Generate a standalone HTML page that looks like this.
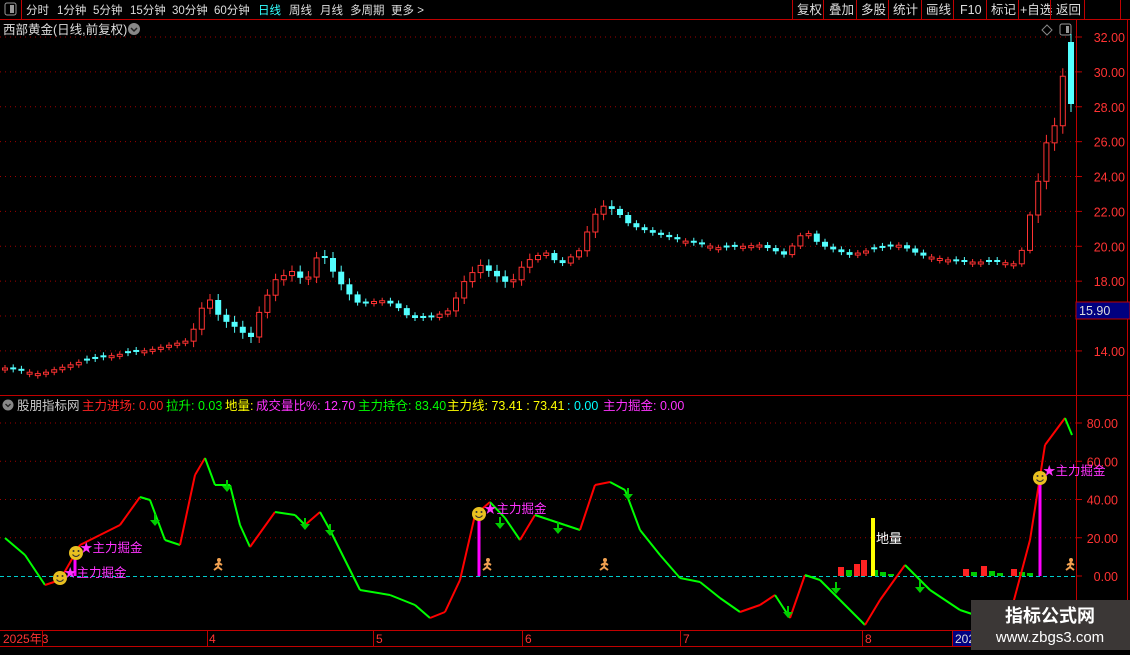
<!DOCTYPE html><html><head><meta charset="utf-8"><style>
body{margin:0;background:#000;width:1130px;height:650px;overflow:hidden;font-family:"Liberation Sans","Noto Sans CJK SC",sans-serif}
svg text{font-family:"Liberation Sans","Noto Sans CJK SC",sans-serif}
</style></head><body>
<svg id="s" width="1130" height="650" xmlns="http://www.w3.org/2000/svg">
<rect width="1130" height="650" fill="#000"/>
<line x1="0" y1="19.5" x2="1130" y2="19.5" stroke="#c00000"/>
<line x1="21.5" y1="0" x2="21.5" y2="19" stroke="#c00000"/>
<rect x="5" y="3" width="11" height="12" rx="2" fill="none" stroke="#999"/><rect x="10" y="5" width="4" height="8" fill="#999"/>
<g font-size="11.5" fill="#ddd">
<text x="26" y="14">分时</text><text x="57" y="14">1分钟</text><text x="93" y="14">5分钟</text><text x="130" y="14">15分钟</text><text x="172" y="14">30分钟</text><text x="214" y="14">60分钟</text>
<text x="258" y="14" fill="#3ff">日线</text><text x="289" y="14">周线</text><text x="320" y="14">月线</text><text x="350" y="14">多周期</text><text x="391" y="14">更多 &gt;</text>
</g>
<g font-size="12.5" fill="#ddd">
<text x="797" y="14">复权</text><text x="829" y="14">叠加</text><text x="861" y="14">多股</text><text x="893" y="14">统计</text><text x="926" y="14">画线</text><text x="960" y="14">F10</text><text x="991" y="14">标记</text><text x="1020" y="14">+自选</text><text x="1056" y="14">返回</text>
</g>
<g stroke="#c00000"><line x1="792.5" y1="0" x2="792.5" y2="19"/><line x1="823.5" y1="0" x2="823.5" y2="19"/><line x1="856.5" y1="0" x2="856.5" y2="19"/><line x1="888.5" y1="0" x2="888.5" y2="19"/><line x1="921.5" y1="0" x2="921.5" y2="19"/><line x1="953.5" y1="0" x2="953.5" y2="19"/><line x1="986.5" y1="0" x2="986.5" y2="19"/><line x1="1018.5" y1="0" x2="1018.5" y2="19"/><line x1="1050.5" y1="0" x2="1050.5" y2="19"/><line x1="1084.5" y1="0" x2="1084.5" y2="19"/><line x1="1120.5" y1="0" x2="1120.5" y2="19"/></g>
<text x="3" y="34" font-size="12.5" fill="#ddd">西部黄金(日线,前复权)</text>
<circle cx="134" cy="29" r="6" fill="#888"/><path d="M131 28l3 3 3-3" stroke="#222" stroke-width="1.5" fill="none"/>
<path d="M1047 25l5 5-5 5-5-5z" fill="none" stroke="#888"/>
<rect x="1060" y="24" width="11" height="11" rx="2" fill="none" stroke="#999"/><rect x="1066" y="26" width="3" height="7" fill="#999"/>
<line x1="1076.5" y1="20" x2="1076.5" y2="650" stroke="#c00000"/>
<line x1="0" y1="395.5" x2="1130" y2="395.5" stroke="#c00000"/>
<line x1="0" y1="630.5" x2="1076" y2="630.5" stroke="#c00000"/>
<line x1="0" y1="646.5" x2="1076" y2="646.5" stroke="#c00000"/>
<line x1="1127.5" y1="20" x2="1127.5" y2="650" stroke="#c00000"/>
<g id="grid"></g><g id="cand"></g><g id="low"></g>
<rect x="1076" y="302" width="54" height="17" fill="#000080" stroke="#c00000"/>
<text x="1079" y="315" font-size="12.5" fill="#ddd">15.90</text>
<circle cx="8" cy="405" r="5.5" fill="#888"/><path d="M5.5 404l2.5 2.5 2.5-2.5" stroke="#222" stroke-width="1.3" fill="none"/>
<g font-size="12.5"><text x="17" y="410" fill="#ccc">股朋指标网</text>
<text x="82" y="410" fill="#f22">主力进场: 0.00</text><text x="166" y="410" fill="#0f0">拉升: 0.03</text><text x="225" y="410" fill="#ff0">地量:</text><text x="256" y="410" fill="#f3f">成交量比%: 12.70</text><text x="358" y="410" fill="#0f0">主力持仓: 83.40</text><text x="447" y="410" fill="#ff0">主力线: 73.41 : 73.41</text><text x="567" y="410" fill="#0ff">: 0.00</text><text x="603" y="410" fill="#f3f">主力掘金: 0.00</text></g>
<g font-size="12" fill="#f33"><text x="3" y="643">2025年3</text><text x="209" y="643">4</text><text x="376" y="643">5</text><text x="525" y="643">6</text><text x="683" y="643">7</text><text x="865" y="643">8</text></g>
<g stroke="#c00000"><line x1="42.5" y1="631" x2="42.5" y2="646"/><line x1="207.5" y1="631" x2="207.5" y2="646"/><line x1="373.5" y1="631" x2="373.5" y2="646"/><line x1="522.5" y1="631" x2="522.5" y2="646"/><line x1="680.5" y1="631" x2="680.5" y2="646"/><line x1="862.5" y1="631" x2="862.5" y2="646"/><line x1="952.5" y1="631" x2="952.5" y2="646"/></g>
<rect x="953" y="631" width="24" height="15" fill="#000080"/><text x="955" y="643" font-size="12" fill="#ddd">202</text>
<rect x="971" y="600" width="159" height="50" fill="#3b3736"/>
<text x="1050" y="622" font-size="18" font-weight="bold" fill="#fff" text-anchor="middle">指标公式网</text>
<text x="1050" y="642" font-size="15" fill="#fff" text-anchor="middle">www.zbgs3.com</text>
</svg>
<script>
(function(){
var NS="http://www.w3.org/2000/svg";
function el(p,t,a){var e=document.createElementNS(NS,t);for(var k in a)e.setAttribute(k,a[k]);p.appendChild(e);return e;}
var g=document.getElementById('grid');
for(var p=14;p<=32;p+=2){var y=37+(32-p)*17.44;
 el(g,'line',{x1:0,y1:y,x2:1076,y2:y,stroke:'#a00000','stroke-dasharray':'1 4'});
 el(g,'line',{x1:1076,y1:y,x2:1082,y2:y,stroke:'#c00000'});
 if(p!=16){var t=el(g,'text',{x:1125,y:y+5,'font-size':12.5,fill:'#f33','text-anchor':'end'});t.textContent=p.toFixed(2);}
}
for(var v=0;v<=80;v+=20){var y=576-v*1.9125;
 if(v>0)el(g,'line',{x1:0,y1:y,x2:1076,y2:y,stroke:'#a00000','stroke-dasharray':'1 4'});
 el(g,'line',{x1:1076,y1:y,x2:1082,y2:y,stroke:'#c00000'});
 var t=el(g,'text',{x:1118,y:y+5,'font-size':12.5,fill:'#f33','text-anchor':'end'});t.textContent=v.toFixed(2);}
el(g,'line',{x1:0,y1:576.5,x2:1076,y2:576.5,stroke:'#0cc','stroke-dasharray':'4 3'});
var K=[[5,368],[40,374],[80,362],[115,355],[150,350],[190,340],[200,310],[210,300],[220,318],[240,330],[250,340],[260,310],[275,280],[295,270],[305,285],[320,250],[335,275],[345,290],[360,305],[380,300],[395,305],[410,318],[430,318],[450,310],[465,280],[480,265],[495,275],[510,285],[525,262],[545,252],[560,265],[580,250],[590,225],[600,205],[615,210],[630,225],[650,232],[680,240],[720,248],[760,245],[785,255],[805,230],[820,245],[850,255],[870,250],[900,245],[920,255],[960,262],[1000,262],[1015,264],[1022,250],[1030,215],[1039,178],[1047,140],[1055,125],[1063,75],[1071,100]];
function interp(x){for(var i=0;i<K.length-1;i++){if(x<=K[i+1][0]){var a=K[i],b=K[i+1];return a[1]+(b[1]-a[1])*(x-a[0])/(b[0]-a[0]);}}return K[K.length-1][1];}
var c=document.getElementById('cand'),prev=interp(0);
for(var i=0;i<=130;i++){var x=5+i*8.2;var cy=interp(x),o=prev,cl=cy;var r=Math.sin(x*1.7);
 if(Math.abs(o-cl)<2){o=cl+2*(r>=0?1:-1);}
 var up=cl<o,tp=Math.min(o,cl),h=Math.max(Math.abs(o-cl),2),col=up?'#ff3232':'#54ffff';
 if(i==130){up=false;col='#54ffff';tp=42;h=62;}
 var big=(x>1030)?8:(x>580&&x<620||x>190&&x<350||x>455&&x<530)?6:3;
 el(c,'line',{x1:x,y1:tp-big,x2:x,y2:tp+h+big,stroke:col});
 if(up)el(c,'rect',{x:x-2.5,y:tp,width:5,height:h,fill:'#000',stroke:col});
 else el(c,'rect',{x:x-3,y:tp,width:6,height:h,fill:col});
 prev=cy;}
var L=[[5,538],[25,555],[45,585],[60,580],[80,545],[100,535],[120,525],[140,497],[150,500],[165,540],[180,545],[195,475],[205,458],[215,485],[230,485],[240,525],[250,547],[275,512],[295,515],[305,525],[320,512],[330,530],[360,590],[390,595],[415,605],[430,618],[445,612],[460,580],[475,515],[490,502],[505,518],[520,540],[535,515],[550,520],[565,525],[580,530],[595,485],[610,482],[625,490],[640,530],[660,555],[680,578],[700,582],[720,598],[740,612],[760,605],[775,595],[790,618],[805,575],[820,580],[840,600],[865,625],[880,600],[905,565],[930,590],[960,610],[990,620],[1010,615],[1030,540],[1045,445],[1065,418],[1072,435]];
var lw=document.getElementById('low');
var vb=[[841,'#f22',567],[849,'#0c0',570],[857,'#f22',564],[864,'#f22',560],[875,'#0c0',570],[883,'#0c0',572],[891,'#0c0',574],[966,'#f22',569],[974,'#0c0',572],[984,'#f22',566],[992,'#0c0',571],[1000,'#0c0',573],[1014,'#f22',569],[1022,'#0c0',572],[1030,'#0c0',573]];
vb.forEach(function(b){el(lw,'rect',{x:b[0]-3,y:b[2],width:6,height:576-b[2],fill:b[1]});});
el(lw,'rect',{x:871,y:518,width:4,height:58,fill:'#ff0'});
var t=el(lw,'text',{x:876,y:543,'font-size':13,fill:'#fff'});t.textContent='地量';
for(var i=0;i<L.length-1;i++){var a=L[i],b=L[i+1];var col=b[1]<a[1]?'#f00':'#0f0';
 el(lw,'line',{x1:a[0],y1:a[1],x2:b[0],y2:b[1],stroke:col,'stroke-width':2});}
[[75,553],[479,514],[1040,478]].forEach(function(s){el(lw,'rect',{x:s[0]-1.5,y:s[1],width:3,height:576-s[1],fill:'#f0f'});});
[[60,578],[76,553],[479,514],[1040,478]].forEach(function(s){el(lw,'circle',{cx:s[0],cy:s[1],r:7,fill:'#e8c020'});
 el(lw,'circle',{cx:s[0]-2.5,cy:s[1]-2,r:1,fill:'#333'});el(lw,'circle',{cx:s[0]+2.5,cy:s[1]-2,r:1,fill:'#333'});
 el(lw,'path',{d:'M'+(s[0]-3.5)+' '+(s[1]+1.5)+'q3.5 4 7 0',stroke:'#333',fill:'none'});});
[[64,577],[80,552],[484,513],[1043,475]].forEach(function(s){var t=el(lw,'text',{x:s[0],y:s[1],'font-size':12.5,fill:'#f3f'});t.textContent='★主力掘金';});
[[218,565],[487,565],[604,565],[1070,565]].forEach(function(w){var x=w[0],y=w[1];
 el(lw,'circle',{cx:x+1,cy:y-5,r:2,fill:'#f0a050'});
 el(lw,'path',{d:'M'+(x+1)+' '+(y-3)+'l-1 5 -4 3 M'+x+' '+(y+2)+'l4 3 M'+(x-3)+' '+y+'l4 -2 3 2',stroke:'#f0a050','stroke-width':2,fill:'none'});});
[[227,486],[155,520],[305,524],[330,530],[500,523],[558,528],[628,494],[788,612],[836,588],[920,587]].forEach(function(a){var x=a[0],y=a[1];
 el(lw,'rect',{x:x-1,y:y-6,width:2,height:6,fill:'#0c0'});el(lw,'path',{d:'M'+(x-5)+' '+y+'h10l-5 6z',fill:'#0c0'});});
})();
</script>
</body></html>
